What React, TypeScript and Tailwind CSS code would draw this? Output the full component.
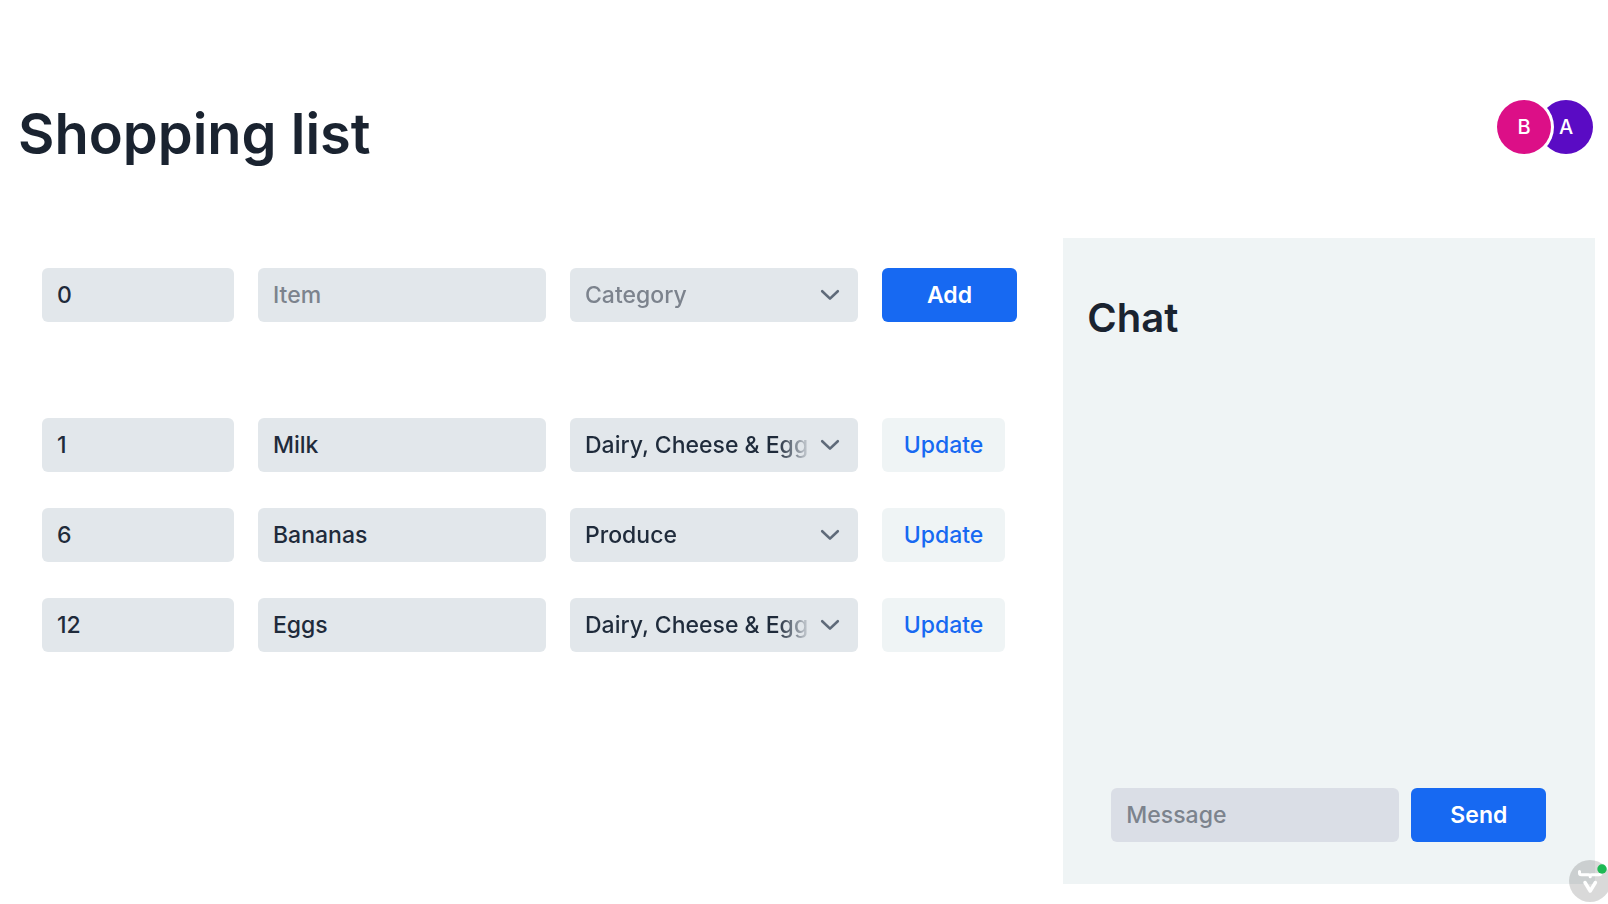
import { useState } from 'react';
import clsx from 'clsx';

type Item = {
  id: number;
  quantity: string;
  name: string;
  category: string;
};

const categories = ['Produce', 'Deli', 'Bakery', 'Meat & Seafood', 'Dairy, Cheese & Eggs', 'Pantry'];

const initialItems: Item[] = [
  { id: 1, quantity: '1', name: 'Milk', category: 'Dairy, Cheese & Eggs' },
  { id: 2, quantity: '6', name: 'Bananas', category: 'Produce' },
  { id: 3, quantity: '12', name: 'Eggs', category: 'Dairy, Cheese & Eggs' },
];

const fieldClass =
  'h-[54px] rounded-md bg-[#e2e7eb] px-[15px] text-[23px] font-medium text-[#1f2b3b] placeholder:text-[#7c838d] placeholder:opacity-100 focus:outline-none focus:ring-2 focus:ring-[#1769f2]';

const primaryButton =
  'h-[54px] w-[135px] shrink-0 rounded-md bg-[#1769f2] text-[23px] font-semibold text-white hover:bg-[#0f5ce0]';

type CategorySelectProps = {
  value: string;
  onChange: (value: string) => void;
};

const CategorySelect = ({ value, onChange }: CategorySelectProps) => (
  <div className="relative w-72 rounded-md bg-[#e2e7eb]">
    {/* long names fade out before the arrow */}
    <select
      aria-label="Category"
      value={value}
      onChange={(e) => onChange(e.target.value)}
      className={clsx(
        'block h-[54px] w-full appearance-none bg-transparent pl-[15px] pr-[51px] text-[23px] font-medium focus:outline-none',
        '[mask-image:linear-gradient(to_right,#000_207px,transparent_243px)]',
        value ? 'text-[#1f2b3b]' : 'text-[#7c838d]'
      )}
    >
      <option value="">Category</option>
      {categories.map((category) => (
        <option key={category} value={category}>
          {category}
        </option>
      ))}
    </select>
    <svg
      className="pointer-events-none absolute right-[18px] top-[21px] h-3 w-5"
      viewBox="0 0 20 12"
      fill="none"
      stroke="#5f6a79"
      strokeWidth="2.6"
      strokeLinecap="round"
      strokeLinejoin="round"
      aria-hidden="true"
    >
      <path d="M2.2 2.2 10 9.6l7.8-7.4" />
    </svg>
  </div>
);

const ShoppingList = () => {
  const [items, setItems] = useState(initialItems);
  const [quantity, setQuantity] = useState('0');
  const [name, setName] = useState('');
  const [category, setCategory] = useState('');

  const handleAdd = (e: React.FormEvent) => {
    e.preventDefault();
    if (!name) return;
    setItems([...items, { id: Date.now(), quantity, name, category }]);
    setQuantity('0');
    setName('');
    setCategory('');
  };

  const updateItem = (id: number, changes: Partial<Item>) => {
    setItems(items.map((item) => (item.id === id ? { ...item, ...changes } : item)));
  };

  return (
    <section className="min-w-0 flex-1 pl-[42px] pt-[30px]">
      <form onSubmit={handleAdd} className="flex gap-6">
        <input
          aria-label="Quantity"
          value={quantity}
          onChange={(e) => setQuantity(e.target.value)}
          className={clsx(fieldClass, 'w-48')}
        />
        <input
          aria-label="Item"
          placeholder="Item"
          value={name}
          onChange={(e) => setName(e.target.value)}
          className={clsx(fieldClass, 'w-72')}
        />
        <CategorySelect value={category} onChange={setCategory} />
        <button type="submit" className={primaryButton}>
          Add
        </button>
      </form>

      <ul className="mt-24 space-y-9">
        {items.map((item) => (
          <li key={item.id} className="flex gap-6">
            <input
              aria-label="Quantity"
              value={item.quantity}
              onChange={(e) => updateItem(item.id, { quantity: e.target.value })}
              className={clsx(fieldClass, 'w-48')}
            />
            <input
              aria-label="Item"
              value={item.name}
              onChange={(e) => updateItem(item.id, { name: e.target.value })}
              className={clsx(fieldClass, 'w-72')}
            />
            <CategorySelect
              value={item.category}
              onChange={(value) => updateItem(item.id, { category: value })}
            />
            <button
              type="button"
              className="h-[54px] w-[123px] shrink-0 rounded-md bg-[#eff4f5] text-[23px] font-medium text-[#1769f2] hover:bg-[#e2e7eb]"
            >
              Update
            </button>
          </li>
        ))}
      </ul>
    </section>
  );
};

const Chat = () => {
  const [message, setMessage] = useState('');

  const handleSend = (e: React.FormEvent) => {
    e.preventDefault();
    setMessage('');
  };

  return (
    <aside className="flex w-1/3 shrink-0 flex-col bg-[#eff4f5] pb-[42px]">
      <h2 className="pl-6 pt-[54px] text-[40px] font-semibold leading-[52px] text-[#1a2330]">Chat</h2>
      <form onSubmit={handleSend} className="mt-auto flex gap-3 px-12">
        <input
          aria-label="Message"
          placeholder="Message"
          value={message}
          onChange={(e) => setMessage(e.target.value)}
          className="h-[54px] w-72 min-w-0 rounded-md bg-[#dadee6] px-[15px] text-[23px] font-medium text-[#1f2b3b] placeholder:text-[#7c838d] placeholder:opacity-100 focus:outline-none focus:ring-2 focus:ring-[#1769f2]"
        />
        <button type="submit" className={primaryButton}>
          Send
        </button>
      </form>
    </aside>
  );
};

const DevToolsBadge = () => (
  <button
    type="button"
    aria-label="Development tools"
    className="fixed -right-[3px] bottom-0.5 h-[42px] w-[42px] rounded-full bg-black/15"
  >
    <svg viewBox="0 0 42 42" fill="none" stroke="#fff" strokeLinecap="round" strokeLinejoin="round" aria-hidden="true">
      <path d="M10.5 11.5v1.5q0 1.8 2 1.8h7q1.7 0 1.7 2 0-2 1.7-2h7q2 0 2-1.8v-1.5" strokeWidth="3" />
      <path d="m16 22.5 5.2 8.500 5.2-8.500" strokeWidth="3.4" />
      <circle cx="33" cy="9" r="4.7" fill="#1db954" stroke="none" />
    </svg>
  </button>
);

export default function App() {
  return (
    <div className="flex min-h-screen flex-col bg-white pb-5 pr-[13px] font-[Inter,'Liberation_Sans',sans-serif]">
      <header className="flex items-start justify-between pb-[70px] pl-[18px] pr-0.5 pt-[100px]">
        <h1 className="text-[56px] font-semibold leading-[68px] text-[#1a2330]">Shopping list</h1>
        <div className="flex text-[20px] font-medium text-white">
          <span className="z-10 flex h-[54px] w-[54px] items-center justify-center rounded-full bg-[#dc0f87] ring-3 ring-white">
            B
          </span>
          <span className="-ml-3 flex h-[54px] w-[54px] items-center justify-center rounded-full bg-[#5a0bc4]">
            A
          </span>
        </div>
      </header>
      <main className="flex flex-1">
        <ShoppingList />
        <Chat />
      </main>
      <DevToolsBadge />
    </div>
  );
}
